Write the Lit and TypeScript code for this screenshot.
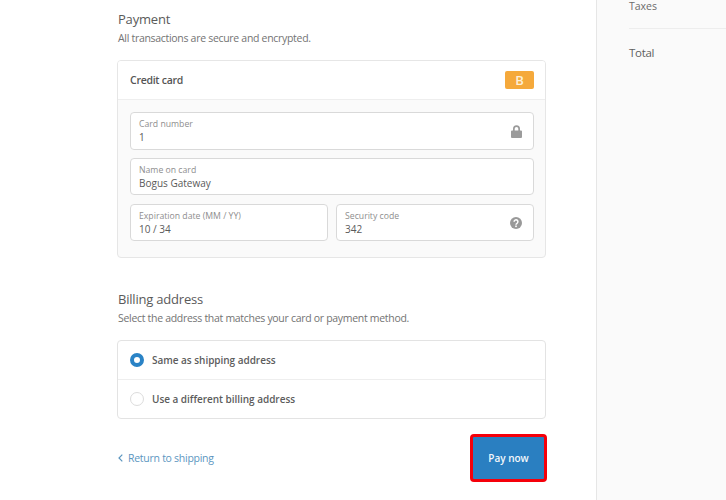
import { LitElement, html, css } from "lit";
import { customElement } from "lit/decorators.js";

@customElement("app-root")
export class AppRoot extends LitElement {
  static styles = css`
    :host {
      display: block;
      width: 726px;
      height: 500px;
      overflow: hidden;
      background: #fff;
      font-family: "Open Sans", "Noto Sans", sans-serif;
      color: #545454;
    }
    .page {
      display: flex;
      height: 500px;
      overflow: hidden;
    }
    .main {
      width: 596px;
      flex: none;
      box-sizing: border-box;
      padding: 10px 50px 0 118px;
    }
    .side {
      flex: 1;
      background: #fafafa;
      border-left: 1px solid #e6e6e6;
      padding-left: 32px;
      color: #6b6b6b;
    }
    .taxes {
      font-size: 10.5px;
      line-height: 12px;
    }
    .side hr {
      border: 0;
      border-top: 1px solid #ededed;
      margin: 16px 0 15px;
    }
    .total {
      font-size: 11.5px;
      line-height: 18px;
      letter-spacing: -0.3px;
      color: #5f5f5f;
    }
    h2 {
      margin: 0;
      font-size: 13px;
      font-weight: 400;
      line-height: 18px;
      letter-spacing: -0.2px;
      color: #5a5a5a;
    }
    .sub {
      margin: 2px 0 0;
      font-size: 10.5px;
      line-height: 16px;
      letter-spacing: -0.3px;
      color: #737373;
    }
    .card {
      margin: 14px 0 0 -1px;
      height: 198px;
      box-sizing: border-box;
      border: 1px solid #e6e6e6;
      border-radius: 4px;
      background: #fafafa;
      overflow: hidden;
    }
    .card-head {
      height: 39px;
      box-sizing: border-box;
      background: #fff;
      border-bottom: 1px solid #eeeeee;
      display: flex;
      align-items: center;
      justify-content: space-between;
      padding: 0 11px 0 12px;
      font-size: 10.5px;
      font-weight: 600;
      letter-spacing: -0.27px;
      color: #555;
    }
    .badge {
      width: 29px;
      height: 18px;
      border-radius: 2px;
      background: #f5a93b;
      color: #fdf0d8;
      font-size: 13px;
      font-weight: 600;
      display: flex;
      align-items: center;
      justify-content: center;
    }
    .fields {
      display: flex;
      flex-direction: column;
      gap: 8px;
      padding: 12px 11px 0 12px;
    }
    .row {
      display: flex;
      gap: 8px;
      margin-top: 1px;
    }
    .field {
      height: 37px;
      box-sizing: border-box;
      background: #fff;
      border: 1px solid #d9d9d9;
      border-radius: 4px;
      padding: 0 9px 0 8px;
      display: flex;
      align-items: center;
      justify-content: space-between;
    }
    .row .field {
      flex: 1;
    }
    .field.first {
      height: 38px;
    }
    .lbl {
      font-size: 8.7px;
      line-height: 12px;
      color: #8e8e8e;
    }
    .val {
      font-size: 10px;
      line-height: 14px;
      color: #5a5a5a;
    }
    .icon {
      display: block;
      flex: none;
      margin: 0 2px 0 0;
    }
    .billing {
      margin-top: 32px;
    }
    .radios {
      margin: 14px 0 0 -1px;
      height: 79px;
      box-sizing: border-box;
      border: 1px solid #e3e3e3;
      border-radius: 4px;
      background: #fff;
    }
    .radio {
      height: 38px;
      box-sizing: border-box;
      display: flex;
      align-items: center;
      gap: 8px;
      padding-left: 12px;
      font-size: 10px;
      font-weight: 600;
      letter-spacing: -0.03px;
      color: #5c5c5c;
    }
    .radio + .radio {
      height: 39px;
      border-top: 1px solid #eeeeee;
    }
    .dot {
      width: 14px;
      height: 14px;
      box-sizing: border-box;
      border-radius: 50%;
      border: 1px solid #dcdcdc;
      background: #fff;
      flex: none;
    }
    .dot.on {
      border: 4.5px solid #2a83c6;
    }
    .foot {
      margin-top: 15px;
      display: flex;
      align-items: center;
      justify-content: space-between;
    }
    .back {
      display: flex;
      align-items: center;
      gap: 5px;
      font-size: 10.5px;
      letter-spacing: -0.27px;
      color: #5c96bf;
    }
    .pay {
      width: 77px;
      height: 48px;
      margin-right: -1px;
      box-sizing: border-box;
      border: 3px solid #f5000a;
      border-radius: 4px;
      background: #2a7fc1;
      color: #f2f7fb;
      font-family: inherit;
      font-size: 10px;
      font-weight: 600;
      padding: 0;
    }
  `;

  render() {
    return html`
      <div class="page">
        <div class="main">
          <h2>Payment</h2>
          <p class="sub">All transactions are secure and encrypted.</p>
          <div class="card">
            <div class="card-head">
              <span>Credit card</span>
              <span class="badge">B</span>
            </div>
            <div class="fields">
              <div class="field first">
                <div>
                  <div class="lbl">Card number</div>
                  <div class="val">1</div>
                </div>
                <svg class="icon" width="11" height="13" viewBox="0 0 11 13">
                  <path fill="#9b9b9b" d="M2 5.500V3.800a3.500 3.500 0 0 1 7 0v1.700h1a1 1 0 0 1 1 1V12a1 1 0 0 1-1 1H1a1 1 0 0 1-1-1V6.500a1 1 0 0 1 1-1zm1.700 0h3.600V3.800a1.800 1.800 0 0 0-3.600 0z" />
                </svg>
              </div>
              <div class="field">
                <div>
                  <div class="lbl">Name on card</div>
                  <div class="val">Bogus Gateway</div>
                </div>
              </div>
              <div class="row">
                <div class="field">
                  <div>
                    <div class="lbl">Expiration date (MM / YY)</div>
                    <div class="val">10 / 34</div>
                  </div>
                </div>
                <div class="field">
                  <div>
                    <div class="lbl">Security code</div>
                    <div class="val">342</div>
                  </div>
                  <svg class="icon" width="12" height="12" viewBox="0 0 12 12">
                    <circle cx="6" cy="6" r="6" fill="#999" />
                    <path fill="none" stroke="#fff" stroke-width="1.500" d="M4.100 4.700a1.900 1.900 0 1 1 2.900 1.600c-.7.4-1 .8-1 1.500" />
                    <rect x="5.200" y="8.500" width="1.600" height="1.600" fill="#fff" />
                  </svg>
                </div>
              </div>
            </div>
          </div>
          <div class="billing">
            <h2>Billing address</h2>
            <p class="sub">Select the address that matches your card or payment method.</p>
          </div>
          <div class="radios">
            <div class="radio"><span class="dot on"></span>Same as shipping address</div>
            <div class="radio"><span class="dot"></span>Use a different billing address</div>
          </div>
          <div class="foot">
            <span class="back">
              <svg width="5" height="8" viewBox="0 0 5 8">
                <path fill="none" stroke="#5c96bf" stroke-width="1.200" d="M4.300.6 1 4l3.300 3.400" />
              </svg>
              Return to shipping
            </span>
            <button class="pay">Pay now</button>
          </div>
        </div>
        <div class="side">
          <div class="taxes">Taxes</div>
          <hr />
          <div class="total">Total</div>
        </div>
      </div>
    `;
  }
}
